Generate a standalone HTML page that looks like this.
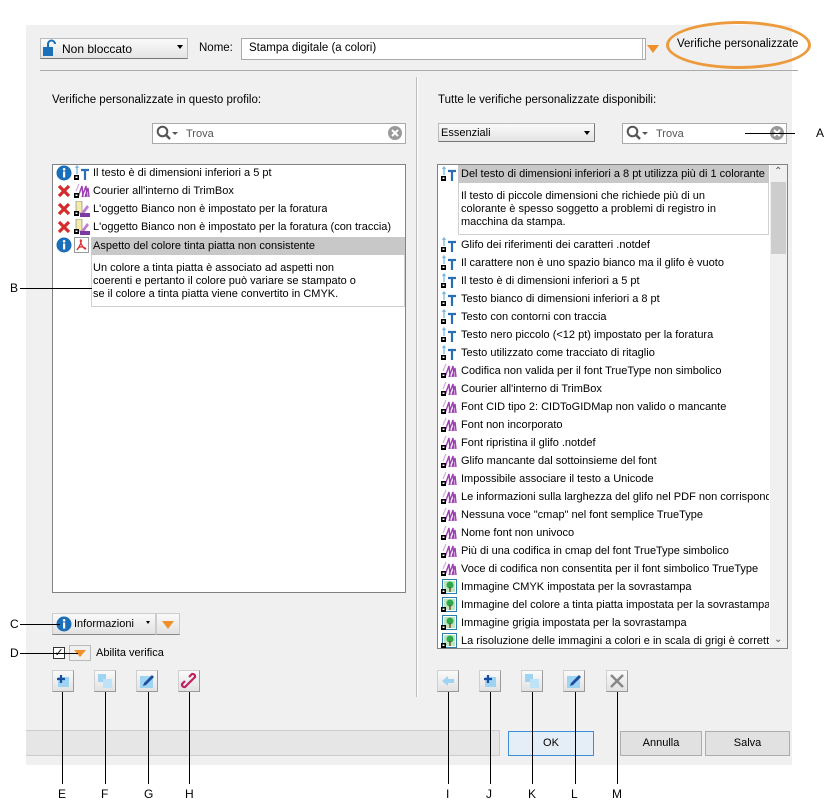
<!DOCTYPE html>
<html><head><meta charset="utf-8">
<style>
*{margin:0;padding:0;box-sizing:border-box}
body{width:831px;height:812px;background:#fff;position:relative;overflow:hidden;font-family:"Liberation Sans","DejaVu Sans",sans-serif;font-size:11px;color:#000}
.a{position:absolute}
.dlg{left:26px;top:25px;width:766px;height:740px;background:#f0f0f0}
.row{position:absolute;height:18px;line-height:18px;white-space:nowrap;overflow:hidden}
.ic{position:absolute;width:16px;height:16px}
.btn{position:absolute;width:22px;height:22px;background:linear-gradient(#fafafa,#e2e2e2);border:1px solid #cfcfcf;border-bottom-color:#9a9a9a;border-right-color:#9a9a9a}
.lbl{position:absolute;font-size:12px}
.ln{position:absolute;background:#000}
.pb{position:absolute;border:1px solid #adadad;background:#e1e1e1;text-align:center;line-height:23px;font-size:11px}
</style></head><body>
<svg width="0" height="0" style="position:absolute">
<defs>
<symbol id="lk" viewBox="0 0 16 16"><rect x="0" y="10" width="5" height="5" fill="#000"/><rect x="1.5" y="11.5" width="2" height="1.5" fill="#fff"/></symbol>
<symbol id="t" viewBox="0 0 16 16"><path d="M3 1v8M1.5 3L3 1l1.5 2" stroke="#7ab8e0" stroke-width="1.3" fill="none"/><path d="M7 5h8M11 5v10" stroke="#2a6fb5" stroke-width="2.2" fill="none"/><use href="#lk"/></symbol>
<symbol id="f" viewBox="0 0 16 16"><path d="M4 14L8 3l1 11M8 14l4-11 1 11M11 14l3-9 1 9" stroke="#9b3fb0" stroke-width="1.4" fill="none"/><path d="M2 8l3-7" stroke="#d8a8e0" stroke-width="1.2"/><use href="#lk"/></symbol>
<symbol id="im" viewBox="0 0 16 16"><rect x="1.5" y="0.5" width="14" height="14" fill="#fff" stroke="#2a7fb0"/><rect x="3" y="2" width="11" height="11" fill="#bfe6c0"/><circle cx="9" cy="6" r="3.5" fill="#2ea84a"/><rect x="8.3" y="8" width="1.4" height="5" fill="#6b4b2a"/><use href="#lk"/></symbol>
<symbol id="i" viewBox="0 0 16 16"><circle cx="8" cy="8" r="7.5" fill="#1a6fb8"/><rect x="7" y="6.5" width="2.2" height="6" fill="#fff"/><circle cx="8.1" cy="4.3" r="1.3" fill="#fff"/></symbol>
<symbol id="x" viewBox="0 0 16 16"><path d="M3 3l10 10M13 3L3 13" stroke="#d42b2b" stroke-width="3.2"/></symbol>
<symbol id="ob" viewBox="0 0 16 16"><rect x="2" y="0" width="6" height="12" fill="#f3e9a8" stroke="#777" stroke-width=".6"/><path d="M7 12l6-8 2 2-6 8z" fill="#c07ed0"/><rect x="6" y="12" width="10" height="4" fill="#7a3aa0"/><use href="#lk"/></symbol>
<symbol id="pdf" viewBox="0 0 16 16"><rect x=".5" y=".5" width="14" height="15" fill="#fff" stroke="#999"/><path d="M3 13c3-4 5-9 4-10s-1 3 2 7 4 1 0 0-6 2-6 3" stroke="#d33" stroke-width="1.3" fill="none"/></symbol>
</defs></svg>

<div class="a dlg"></div>

<!-- top bar -->
<div class="a" style="left:40px;top:38px;width:148px;height:21px;background:linear-gradient(#fafafa,#e4e4e4);border:1px solid #bbb;border-bottom-color:#777"></div>
<svg class="a" style="left:42px;top:39px" width="16" height="18"><path d="M6 8V5a3.5 3.5 0 0 1 7 0" stroke="#1a6fb8" stroke-width="2" fill="none"/><rect x="1" y="8" width="10" height="9" fill="#1a6fb8"/></svg>
<div class="a" style="left:62px;top:42px;font-size:12px">Non bloccato</div>
<div class="a" style="left:177px;top:45px;border:3px solid transparent;border-top:4px solid #000"></div>
<div class="a" style="left:199px;top:42px;font-size:11.5px">Nome:</div>
<div class="a" style="left:241px;top:38px;width:405px;height:22px;background:#fff;border:1px solid #aaa"></div>
<div class="a" style="left:249px;top:42px;font-size:11.5px">Stampa digitale (a colori)</div>
<div class="a" style="left:642px;top:39px;width:24px;height:20px;border-left:1px solid #bbb"></div>
<div class="a" style="left:647px;top:45px;border:6px solid transparent;border-top:8px solid #f0902a;border-bottom:0"></div>
<div class="a" style="left:666px;top:21px;width:145px;height:48px;border:3px solid #ec9a3c;border-radius:50%"></div>
<div class="a" style="left:677px;top:38px;font-size:11.5px">Verifiche personalizzate</div>
<div class="a" style="left:40px;top:70px;width:758px;height:1px;background:#aaa"></div>

<!-- separator -->
<div class="a" style="left:416px;top:77px;width:2px;height:620px;border-left:1px solid #bbb;border-right:1px solid #fff"></div>

<!-- left labels -->
<div class="a" style="left:52px;top:94px;font-size:11.5px">Verifiche personalizzate in questo profilo:</div>
<div class="a" style="left:152px;top:123px;width:254px;height:21px;background:#fff;border:1px solid #aaa"></div>
<svg class="a" style="left:156px;top:125px" width="30" height="17"><circle cx="6.5" cy="6.5" r="4.8" stroke="#555" stroke-width="2" fill="none"/><path d="M10 10l4 4" stroke="#555" stroke-width="2.5"/><path d="M16 7h6l-3 3z" fill="#555"/></svg>
<div class="a" style="left:186px;top:128px;color:#555">Trova</div>
<svg class="a" style="left:387px;top:125px" width="16" height="16"><circle cx="8" cy="8" r="7" fill="#999"/><path d="M5 5l6 6M11 5l-6 6" stroke="#fff" stroke-width="2"/></svg>

<!-- left list -->
<div class="a" style="left:52px;top:164px;width:354px;height:429px;background:#fff;border:1px solid #828282"></div>
<svg class="ic a" style="left:56px;top:165px"><use href="#i"/></svg><svg class="ic a" style="left:74px;top:165px"><use href="#t"/></svg><div class="row" style="left:93px;top:164px">Il testo è di dimensioni inferiori a 5 pt</div>
<svg class="ic a" style="left:56px;top:183px"><use href="#x"/></svg><svg class="ic a" style="left:74px;top:183px"><use href="#f"/></svg><div class="row" style="left:93px;top:182px">Courier all'interno di TrimBox</div>
<svg class="ic a" style="left:56px;top:201px"><use href="#x"/></svg><svg class="ic a" style="left:74px;top:201px"><use href="#ob"/></svg><div class="row" style="left:93px;top:200px">L'oggetto Bianco non è impostato per la foratura</div>
<svg class="ic a" style="left:56px;top:219px"><use href="#x"/></svg><svg class="ic a" style="left:74px;top:219px"><use href="#ob"/></svg><div class="row" style="left:93px;top:218px;width:312px">L'oggetto Bianco non è impostato per la foratura (con traccia)</div>
<svg class="ic a" style="left:56px;top:237px"><use href="#i"/></svg><svg class="ic a" style="left:74px;top:237px"><use href="#pdf"/></svg>
<div class="a" style="left:91px;top:237px;width:314px;height:70px;border:1px solid #d0d0d0"></div>
<div class="row" style="left:91px;top:237px;width:314px;height:18px;background:#c8c8c8;padding-left:2px">Aspetto del colore tinta piatta non consistente</div>
<div class="a" style="left:93px;top:262px;line-height:13px;width:310px;white-space:nowrap">Un colore a tinta piatta è associato ad aspetti non<br>coerenti e pertanto il colore può variare se stampato o<br>se il colore a tinta piatta viene convertito in CMYK.</div>

<!-- right labels -->
<div class="a" style="left:438px;top:94px;font-size:11.5px">Tutte le verifiche personalizzate disponibili:</div>
<div class="a" style="left:438px;top:123px;width:157px;height:19px;background:linear-gradient(#fafafa,#e4e4e4);border:1px solid #bbb;border-bottom-color:#777;border-right-color:#777"></div>
<div class="a" style="left:441px;top:127px">Essenziali</div>
<div class="a" style="left:584px;top:131px;border:3px solid transparent;border-top:4px solid #000"></div>
<div class="a" style="left:622px;top:123px;width:165px;height:21px;background:#fff;border:1px solid #aaa"></div>
<svg class="a" style="left:626px;top:125px" width="30" height="17"><circle cx="6.5" cy="6.5" r="4.8" stroke="#555" stroke-width="2" fill="none"/><path d="M10 10l4 4" stroke="#555" stroke-width="2.5"/><path d="M16 7h6l-3 3z" fill="#555"/></svg>
<div class="a" style="left:656px;top:128px;color:#555">Trova</div>
<svg class="a" style="left:769px;top:125px" width="16" height="16"><circle cx="8" cy="8" r="7" fill="#999"/><path d="M5 5l6 6M11 5l-6 6" stroke="#fff" stroke-width="2"/></svg>

<!-- right list -->
<div class="a" style="left:437px;top:164px;width:351px;height:485px;background:#fff;border:1px solid #828282"></div>
<div class="a" style="left:770px;top:165px;width:17px;height:483px;background:#f0f0f0"></div>
<div class="a" style="left:771px;top:182px;width:15px;height:72px;background:#cdcdcd"></div>
<div class="a" style="left:774px;top:166px;font-size:10px;color:#555">&#8963;</div>
<div class="a" style="left:774px;top:634px;font-size:10px;color:#555">&#8964;</div>
<div class="a" style="left:458px;top:165px;width:311px;height:70px;border:1px solid #d0d0d0"></div>
<div class="row" style="left:458px;top:165px;width:311px;background:#c8c8c8;padding-left:3px">Del testo di dimensioni inferiori a 8 pt utilizza più di 1 colorante</div>
<svg class="ic a" style="left:441px;top:166px"><use href="#t"/></svg>
<div class="a" style="left:461px;top:190px;line-height:13px;width:300px;white-space:nowrap">Il testo di piccole dimensioni che richiede più di un<br>colorante è spesso soggetto a problemi di registro in<br>macchina da stampa.</div>

<svg class="ic a" style="left:441px;top:237px"><use href="#t"/></svg><div class="row" style="left:461px;top:236px;width:308px">Glifo dei riferimenti dei caratteri .notdef</div>
<svg class="ic a" style="left:441px;top:255px"><use href="#t"/></svg><div class="row" style="left:461px;top:254px;width:308px">Il carattere non è uno spazio bianco ma il glifo è vuoto</div>
<svg class="ic a" style="left:441px;top:273px"><use href="#t"/></svg><div class="row" style="left:461px;top:272px;width:308px">Il testo è di dimensioni inferiori a 5 pt</div>
<svg class="ic a" style="left:441px;top:291px"><use href="#t"/></svg><div class="row" style="left:461px;top:290px;width:308px">Testo bianco di dimensioni inferiori a 8 pt</div>
<svg class="ic a" style="left:441px;top:309px"><use href="#t"/></svg><div class="row" style="left:461px;top:308px;width:308px">Testo con contorni con traccia</div>
<svg class="ic a" style="left:441px;top:327px"><use href="#t"/></svg><div class="row" style="left:461px;top:326px;width:308px">Testo nero piccolo (&lt;12 pt) impostato per la foratura</div>
<svg class="ic a" style="left:441px;top:345px"><use href="#t"/></svg><div class="row" style="left:461px;top:344px;width:308px">Testo utilizzato come tracciato di ritaglio</div>
<svg class="ic a" style="left:441px;top:363px"><use href="#f"/></svg><div class="row" style="left:461px;top:362px;width:308px">Codifica non valida per il font TrueType non simbolico</div>
<svg class="ic a" style="left:441px;top:381px"><use href="#f"/></svg><div class="row" style="left:461px;top:380px;width:308px">Courier all'interno di TrimBox</div>
<svg class="ic a" style="left:441px;top:399px"><use href="#f"/></svg><div class="row" style="left:461px;top:398px;width:308px">Font CID tipo 2: CIDToGIDMap non valido o mancante</div>
<svg class="ic a" style="left:441px;top:417px"><use href="#f"/></svg><div class="row" style="left:461px;top:416px;width:308px">Font non incorporato</div>
<svg class="ic a" style="left:441px;top:435px"><use href="#f"/></svg><div class="row" style="left:461px;top:434px;width:308px">Font ripristina il glifo .notdef</div>
<svg class="ic a" style="left:441px;top:453px"><use href="#f"/></svg><div class="row" style="left:461px;top:452px;width:308px">Glifo mancante dal sottoinsieme del font</div>
<svg class="ic a" style="left:441px;top:471px"><use href="#f"/></svg><div class="row" style="left:461px;top:470px;width:308px">Impossibile associare il testo a Unicode</div>
<svg class="ic a" style="left:441px;top:489px"><use href="#f"/></svg><div class="row" style="left:461px;top:488px;width:308px">Le informazioni sulla larghezza del glifo nel PDF non corrispondono</div>
<svg class="ic a" style="left:441px;top:507px"><use href="#f"/></svg><div class="row" style="left:461px;top:506px;width:308px">Nessuna voce "cmap" nel font semplice TrueType</div>
<svg class="ic a" style="left:441px;top:525px"><use href="#f"/></svg><div class="row" style="left:461px;top:524px;width:308px">Nome font non univoco</div>
<svg class="ic a" style="left:441px;top:543px"><use href="#f"/></svg><div class="row" style="left:461px;top:542px;width:308px">Più di una codifica in cmap del font TrueType simbolico</div>
<svg class="ic a" style="left:441px;top:561px"><use href="#f"/></svg><div class="row" style="left:461px;top:560px;width:308px">Voce di codifica non consentita per il font simbolico TrueType</div>
<svg class="ic a" style="left:441px;top:579px"><use href="#im"/></svg><div class="row" style="left:461px;top:578px;width:308px">Immagine CMYK impostata per la sovrastampa</div>
<svg class="ic a" style="left:441px;top:597px"><use href="#im"/></svg><div class="row" style="left:461px;top:596px;width:308px">Immagine del colore a tinta piatta impostata per la sovrastampa</div>
<svg class="ic a" style="left:441px;top:615px"><use href="#im"/></svg><div class="row" style="left:461px;top:614px;width:308px">Immagine grigia impostata per la sovrastampa</div>
<svg class="ic a" style="left:441px;top:633px"><use href="#im"/></svg><div class="row" style="left:461px;top:632px;width:308px">La risoluzione delle immagini a colori e in scala di grigi è corretta</div>

<!-- left bottom controls -->
<div class="a" style="left:52px;top:613px;width:104px;height:22px;background:linear-gradient(#fafafa,#e2e2e2);border:1px solid #ccc;border-bottom-color:#888"></div>
<div class="a" style="left:156px;top:613px;width:24px;height:22px;background:linear-gradient(#fafafa,#e2e2e2);border:1px solid #ccc;border-bottom-color:#888"></div>
<svg class="ic a" style="left:56px;top:616px"><use href="#i"/></svg>
<div class="a" style="left:74px;top:618px">Informazioni</div>
<div class="a" style="left:146px;top:621px;border:2.5px solid transparent;border-top:3.5px solid #000"></div>
<div class="a" style="left:162px;top:621px;border:6px solid transparent;border-top:8px solid #f0902a;border-bottom:0"></div>
<div class="a" style="left:53px;top:647px;width:12px;height:12px;background:#fff;border:1px solid #333;font-size:11px;line-height:10px;text-align:center">✓</div>
<div class="a" style="left:69px;top:645px;width:22px;height:16px;border:1px solid #bbb"></div>
<div class="a" style="left:74px;top:650px;border:6px solid transparent;border-top:7px solid #f0902a;border-bottom:0"></div>
<div class="a" style="left:96px;top:647px">Abilita verifica</div>

<!-- tool buttons -->
<div class="btn" style="left:52px;top:670px"><svg width="20" height="20"><rect x="5" y="6" width="11" height="10" fill="#9fd3f2"/><path d="M8 4v8M4 8h8" stroke="#1a4fa0" stroke-width="2.2"/></svg></div>
<div class="btn" style="left:94px;top:670px"><svg width="20" height="20"><rect x="3" y="3" width="8" height="8" fill="#9fd3f2"/><rect x="8" y="8" width="9" height="9" fill="#bfe2f7"/></svg></div>
<div class="btn" style="left:136px;top:670px"><svg width="20" height="20"><rect x="3" y="5" width="13" height="12" fill="#9fd3f2"/><path d="M6 15l1-3 8-8 2 2-8 8z" fill="#1a4fa0"/></svg></div>
<div class="btn" style="left:178px;top:670px"><svg width="20" height="20"><path d="M8 12l-3 3a2.5 2.5 0 0 1-3-3l3-3M12 8l3-3a2.5 2.5 0 0 0-3-3l-3 3M8 12l4-4" stroke="#c02060" stroke-width="2.2" fill="none" transform="translate(1,1)"/></svg></div>

<div class="btn" style="left:437px;top:670px"><svg width="20" height="20"><path d="M4 10l6-5v3h6v4h-6v3z" fill="#9fd3f2"/></svg></div>
<div class="btn" style="left:479px;top:670px"><svg width="20" height="20"><rect x="5" y="6" width="11" height="10" fill="#9fd3f2"/><path d="M8 4v8M4 8h8" stroke="#1a4fa0" stroke-width="2.2"/></svg></div>
<div class="btn" style="left:521px;top:670px"><svg width="20" height="20"><rect x="3" y="3" width="8" height="8" fill="#9fd3f2"/><rect x="8" y="8" width="9" height="9" fill="#bfe2f7"/></svg></div>
<div class="btn" style="left:563px;top:670px"><svg width="20" height="20"><rect x="3" y="5" width="13" height="12" fill="#9fd3f2"/><path d="M6 15l1-3 8-8 2 2-8 8z" fill="#1a4fa0"/></svg></div>
<div class="btn" style="left:606px;top:670px"><svg width="20" height="20"><path d="M4 4l12 12M16 4L4 16" stroke="#888" stroke-width="2.5"/></svg></div>

<!-- bottom bar -->
<div class="a" style="left:26px;top:730px;width:474px;height:26px;background:#e6e6e6;border:1px solid #ccc;border-left:0"></div>
<div class="pb" style="left:508px;top:731px;width:86px;height:25px;border-color:#3c8fd8;background:#e5eef7">OK</div>
<div class="pb" style="left:620px;top:731px;width:82px;height:25px">Annulla</div>
<div class="pb" style="left:705px;top:731px;width:85px;height:25px">Salva</div>

<!-- callouts -->
<div class="ln" style="left:745px;top:133px;width:50px;height:1px"></div><div class="lbl" style="left:816px;top:126px">A</div>
<div class="ln" style="left:20px;top:288px;width:72px;height:1px"></div><div class="lbl" style="left:10px;top:281px">B</div>
<div class="ln" style="left:20px;top:624px;width:40px;height:1px"></div><div class="lbl" style="left:10px;top:617px">C</div>
<div class="ln" style="left:20px;top:653px;width:58px;height:1px"></div><div class="lbl" style="left:10px;top:646px">D</div>
<div class="ln" style="left:62px;top:692px;width:1px;height:92px"></div><div class="lbl" style="left:58px;top:787px">E</div>
<div class="ln" style="left:105px;top:692px;width:1px;height:92px"></div><div class="lbl" style="left:101px;top:787px">F</div>
<div class="ln" style="left:148px;top:692px;width:1px;height:92px"></div><div class="lbl" style="left:144px;top:787px">G</div>
<div class="ln" style="left:189px;top:692px;width:1px;height:92px"></div><div class="lbl" style="left:185px;top:787px">H</div>
<div class="ln" style="left:448px;top:692px;width:1px;height:92px"></div><div class="lbl" style="left:446px;top:787px">I</div>
<div class="ln" style="left:490px;top:692px;width:1px;height:92px"></div><div class="lbl" style="left:486px;top:787px">J</div>
<div class="ln" style="left:532px;top:692px;width:1px;height:92px"></div><div class="lbl" style="left:528px;top:787px">K</div>
<div class="ln" style="left:575px;top:692px;width:1px;height:92px"></div><div class="lbl" style="left:571px;top:787px">L</div>
<div class="ln" style="left:617px;top:692px;width:1px;height:92px"></div><div class="lbl" style="left:612px;top:787px">M</div>
</body></html>
